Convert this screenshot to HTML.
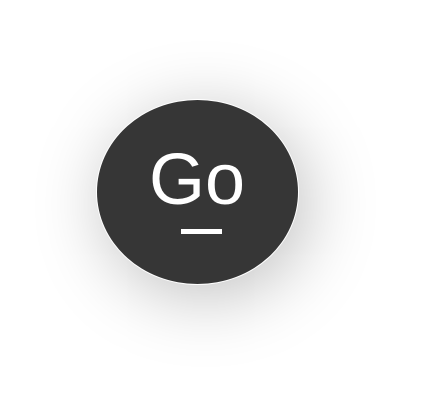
<!DOCTYPE html>
<html><head><style>
html,body{margin:0;padding:0;width:434px;height:418px;background:#fff;overflow:hidden}
.c{position:absolute;left:96px;top:99px;width:201px;height:184px;border-radius:50%;background:#363636;border:1px solid #fff;box-shadow:8px 12px 70px rgba(0,0,0,0.25)}
.t{position:absolute;left:-20px;width:434px;top:138px;text-align:center;font-family:"Liberation Sans",sans-serif;font-size:72px;color:#fff;line-height:84px}
.u{position:absolute;left:181px;top:229px;width:41px;height:5px;background:#fff}
</style></head><body>
<div class="c"></div>
<div class="t">Go</div>
<div class="u"></div>
</body></html>
